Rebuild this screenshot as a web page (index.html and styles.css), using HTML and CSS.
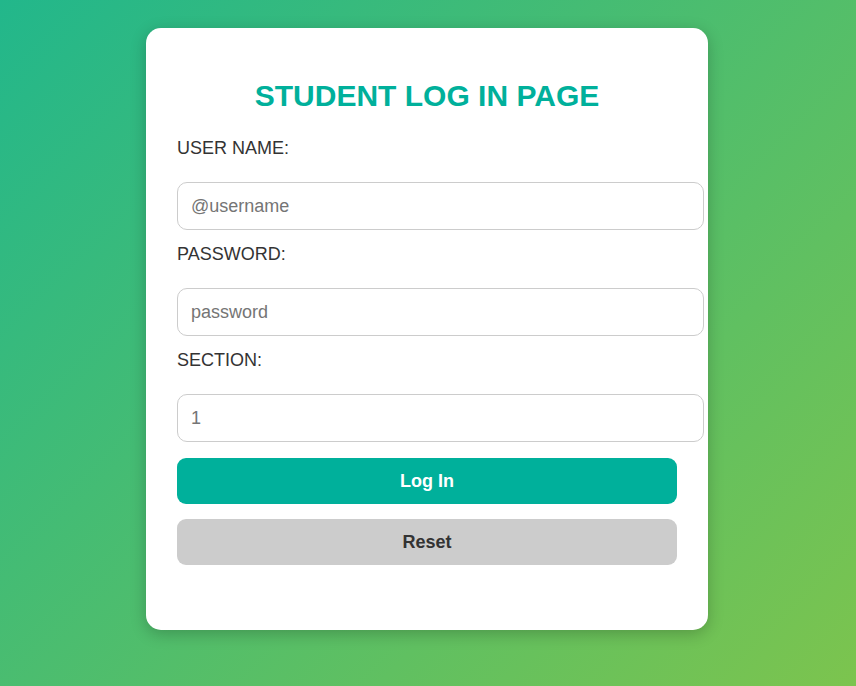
FILE: index.html
```html
<!DOCTYPE html>
<html lang="en">
<head>
<meta charset="utf-8">
<title>Student Log In</title>
<link rel="stylesheet" href="styles.css">
</head>
<body>
  <main class="page">
    <div class="card">
      <h1 class="title">STUDENT LOG IN PAGE</h1>
      <form class="form">
        <label class="field-label" for="username">USER NAME:</label>
        <input class="field-input" id="username" type="text" placeholder="@username">
        <label class="field-label" for="password">PASSWORD:</label>
        <input class="field-input" id="password" type="password" placeholder="password">
        <label class="field-label" for="section">SECTION:</label>
        <input class="field-input" id="section" type="text" placeholder="1">
        <button class="btn btn-primary" type="button">Log In</button>
        <button class="btn btn-secondary" type="reset">Reset</button>
      </form>
    </div>
  </main>
</body>
</html>
```

FILE: styles.css
```css
html {
  min-height: 100%;
  background: linear-gradient(135deg, #22b78b 0%, #7cc44e 100%);
}

body {
  margin: 0;
  min-height: 100vh;
  font-family: "Liberation Sans", Arial, sans-serif;
}

.page {
  display: flex;
  justify-content: center;
  padding: 28px 2px 0 0;
}

.card {
  width: 500px;
  padding: 30px 31px 65px;
  background: #ffffff;
  border-radius: 15px;
  box-shadow: 0 4px 16px rgba(0, 0, 0, 0.22);
}

.title {
  margin: 20px 0 0;
  font-size: 30px;
  line-height: 35px;
  font-weight: bold;
  color: #00b09b;
  text-align: center;
}

.form {
  display: flex;
  flex-direction: column;
  align-items: flex-start;
}

.field-label {
  display: block;
  margin-top: 13px;
  font-size: 18px;
  line-height: 22px;
  color: #333333;
}

.form .field-label:first-child {
  margin-top: 24px;
}

.field-input {
  box-sizing: content-box;
  width: 500px;
  height: 46px;
  margin: 23px 0 0;
  padding: 0 12px 0 13px;
  border: 1px solid #cccccc;
  border-radius: 10px;
  font-family: "Liberation Sans", Arial, sans-serif;
  font-size: 18px;
  color: #333333;
  background: #ffffff;
  outline: none;
}

.field-input::placeholder {
  color: #757575;
}

.btn {
  width: 500px;
  height: 46px;
  border: none;
  border-radius: 9px;
  font-family: "Liberation Sans", Arial, sans-serif;
  font-size: 18px;
  font-weight: bold;
  cursor: pointer;
}

.btn-primary {
  margin-top: 16px;
  background: #00b09b;
  color: #ffffff;
}

.btn-secondary {
  margin-top: 15px;
  background: #cccccc;
  color: #333333;
}
```
